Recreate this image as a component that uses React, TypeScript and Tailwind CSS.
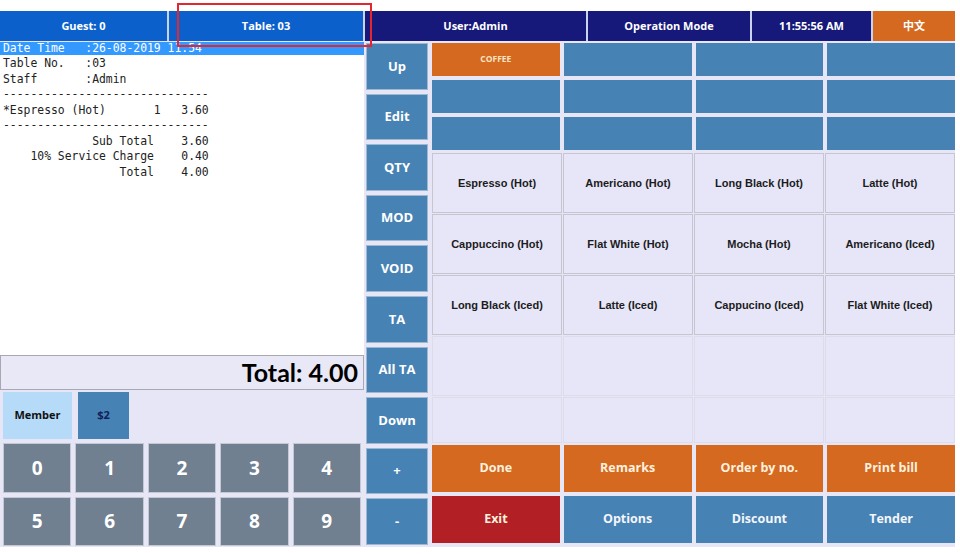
import React from "react";

const receiptLines = [
  "Table No.   :03",
  "Staff       :Admin",
  "------------------------------",
  "*Espresso (Hot)       1   3.60",
  "------------------------------",
  "             Sub Total    3.60",
  "    10% Service Charge    0.40",
  "                 Total    4.00",
];

const sideButtons = ["Up", "Edit", "QTY", "MOD", "VOID", "TA", "All TA", "Down", "+", "-"];

const products = [
  "Espresso (Hot)",
  "Americano (Hot)",
  "Long Black (Hot)",
  "Latte (Hot)",
  "Cappuccino (Hot)",
  "Flat White (Hot)",
  "Mocha (Hot)",
  "Americano (Iced)",
  "Long Black (Iced)",
  "Latte (Iced)",
  "Cappucino (Iced)",
  "Flat White (Iced)",
  "", "", "", "",
  "", "", "", "",
];

function HeaderCell({ label, className }: { label: string; className: string }) {
  return (
    <div className={`flex items-center justify-center text-[11px] font-bold text-white ${className}`}>
      {label}
    </div>
  );
}

export default function App() {
  return (
    <div
      className="relative w-[960px] h-[554px] bg-white pt-[11px] overflow-hidden"
      style={{ fontFamily: '"Open Sans", "Noto Sans CJK SC", sans-serif' }}
    >
      {/* top status bar */}
      <div className="flex h-[30px] w-[955px] gap-[2px] bg-[#c9d3ec]">
        <HeaderCell label="Guest: 0" className="w-[167px] bg-[#0c60cc]" />
        <HeaderCell label="Table: 03" className="w-[194px] bg-[#0c60cc]" />
        <HeaderCell label="User:Admin" className="w-[221px] bg-[#16187a]" />
        <HeaderCell label="Operation Mode" className="w-[162px] bg-[#16187a]" />
        <HeaderCell label="11:55:56 AM" className="w-[119px] bg-[#16187a]" />
        <HeaderCell label="中文" className="flex-1 bg-[#d4691f]" />
      </div>

      {/* main area */}
      <div className="flex w-[955px] h-[506px] bg-[#e6e6f6] pt-[1px]">
        {/* left: receipt + keypad */}
        <div className="flex flex-col w-[364px]">
          <div
            className="h-[313px] bg-white text-[11.4px] leading-[15.5px] text-[#222] whitespace-pre"
            style={{ fontFamily: '"DejaVu Sans Mono", monospace' }}
          >
            <div className="bg-[#3399ff] text-white pl-[3px] h-[13px] leading-[13px]">Date Time   :26-08-2019 11:54</div>
            <div className="pl-[3px] pt-[1px]">
              {receiptLines.map((l, i) => (
                <div key={i}>{l}</div>
              ))}
            </div>
          </div>
          <div
            className="h-[35px] border border-[#a8a8b4] bg-[#e8e8f6] flex items-center justify-end pr-[5px] text-[25px] font-bold text-black"
            style={{ fontFamily: 'Lato, "Open Sans", sans-serif' }}
          >
            Total: 4.00
          </div>
          <div className="h-[51px] flex gap-[6px] pl-[3px] pt-[2px] pb-[2px]">
            <div className="w-[69px] bg-[#b5dbf9] flex items-center justify-center text-[11px] font-bold text-[#111]">
              Member
            </div>
            <div className="w-[51px] bg-[#4682b4] flex items-center justify-center text-[11px] font-bold text-[#13205a]">
              $2
            </div>
          </div>
          <div className="grid grid-cols-5 grid-rows-2 gap-[4px] px-[3px] pt-[2px] h-[105px]">
            {["0", "1", "2", "3", "4", "5", "6", "7", "8", "9"].map((n) => (
              <div
                key={n}
                className="bg-[#708090] border border-[#c4c8d2] flex items-center justify-center text-[19px] font-bold text-white"
              >
                {n}
              </div>
            ))}
          </div>
        </div>

        {/* middle: function column */}
        <div className="ml-[2px] w-[62px] grid grid-rows-10 gap-[4px] pt-[1px] h-[503px]">
          {sideButtons.map((b) => (
            <div
              key={b}
              className="bg-[#4682b4] border border-[#9fb8d2] flex items-center justify-center text-[13px] font-bold text-white"
            >
              {b}
            </div>
          ))}
        </div>

        {/* right: menu grid */}
        <div className="ml-[4px] w-[523px] flex flex-col">
          <div className="grid grid-cols-4 grid-rows-3 gap-[4px] h-[108px] pt-[1px]">
            <div className="bg-[#d4691f] flex items-center justify-center text-[8.5px] font-bold text-[#fbe3c2]">COFFEE</div>
            {Array.from({ length: 11 }).map((_, i) => (
              <div key={i} className="bg-[#4682b4]" />
            ))}
          </div>
          <div className="grid grid-cols-4 grid-rows-[60px_60px_60px_60px_46px] gap-[1px] mt-[3px] h-[290px]">
            {products.map((p, i) => (
              <div
                key={i}
                className={`flex items-center justify-center text-[11px] font-bold text-[#1c1c1c] bg-[#e6e6f8] border ${
                  p ? "border-[#c6c6d2]" : "border-[#dcdcea]"
                }`}
                style={{ fontFamily: '"Liberation Sans", Arial, sans-serif' }}
              >
                {p}
              </div>
            ))}
          </div>
          <div className="grid grid-cols-4 grid-rows-2 gap-[4px] mt-[2px] h-[98px]">
            {["Done", "Remarks", "Order by no.", "Print bill"].map((t) => (
              <div key={t} className="bg-[#d4691f] flex items-center justify-center text-[12.5px] font-bold text-[#fff1df]">
                {t}
              </div>
            ))}
            <div className="bg-[#b21f24] flex items-center justify-center text-[12.5px] font-bold text-[#fff1df]">Exit</div>
            {["Options", "Discount", "Tender"].map((t) => (
              <div key={t} className="bg-[#4682b4] flex items-center justify-center text-[12.5px] font-bold text-[#f4f6fb]">
                {t}
              </div>
            ))}
          </div>
        </div>
      </div>

      {/* red annotation frame over the header */}
      <div className="absolute left-[177px] top-[3px] w-[195px] h-[44px] border-2 border-[#e3262f] pointer-events-none" />
    </div>
  );
}
